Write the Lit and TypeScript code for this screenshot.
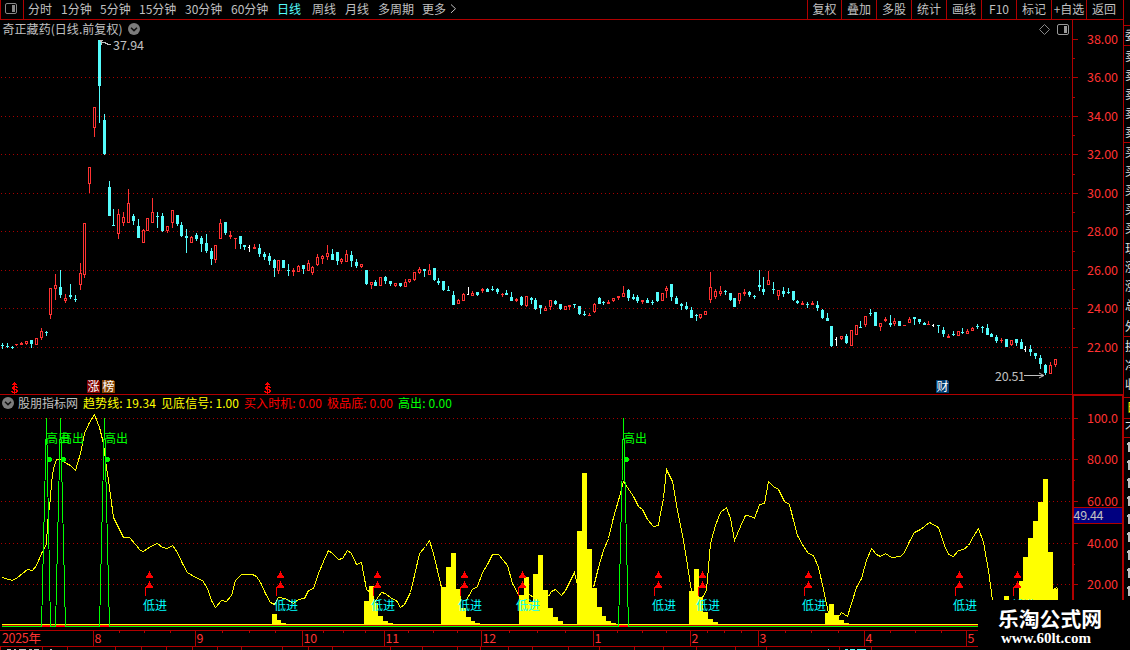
import { LitElement, html, svg, css } from "lit";
import { customElement } from "lit/decorators.js";

const RED = "#ff3232";
const FRAME = "#b00000";
const GRAY = "#c0c0c0";
const CYAN = "#54fcfc";
const YELLOW = "#ffff00";
const GREEN = "#00ff00";

// Candles: x, high, low, body top, body bottom. A leading letter gives the kind:
// r rising, c falling, w unchanged; a body of one row is drawn as a dash.
const CANDLES = `
c 2 343 349 345 346|c 7 343 348 346 347|c 12 346 349 347 348|r 16 344 346 344 345|r 21 342 345 343 345|r 26 341 345 341 344
c 31 340 348 340 344|r 36 338 345 338 345|r 41 328 340 331 338|c 46 331 336 332 333|r 50 288 319 288 315|r 55 274 300 285 289
c 60 270 298 287 295|r 65 294 303 298 301|c 70 284 299 295 297|c 75 295 302 299 300|r 80 263 290 273 285|r 84 223 278 223 275
r 89 167 193 167 184|r 94 107 137 107 128|c 99 40 123 40 86|c 104 114 155 120 154|c 109 181 216 187 216|c 113 209 226 225 226
r 118 209 239 214 234|r 123 212 226 217 223|r 128 189 223 203 223|c 133 214 225 216 221|c 138 219 238 226 238|r 143 229 243 230 243
r 147 218 231 218 231|r 152 198 223 212 223|c 157 212 228 216 217|c 162 213 232 216 231|r 167 226 233 226 231|r 172 210 228 210 223
c 177 215 226 215 224|c 181 222 237 225 236|c 186 229 253 236 238|r 191 236 243 237 243|c 196 233 241 235 239|c 201 236 252 238 244
c 206 234 253 243 251|c 211 248 265 251 259|r 215 245 263 245 260|r 220 219 239 223 239|c 225 222 235 222 233|r 230 231 239 235 237
r 235 238 249 238 239|c 240 236 249 236 244|c 244 245 250 245 247|w 249 245 252 247 248|r 254 244 249 247 249|c 259 244 257 248 254
c 264 252 260 254 257|c 269 253 265 256 261|c 274 259 277 260 268|r 278 260 274 260 271|c 283 260 268 260 268|c 288 264 276 270 271
r 293 268 276 270 272|r 298 265 272 266 272|c 303 265 274 265 269|r 308 260 271 263 271|r 312 266 275 267 273|r 317 254 266 257 265
r 322 255 264 256 259|r 327 245 260 253 257|c 332 249 260 254 260|c 337 252 265 252 261|r 341 258 264 259 262|r 346 250 262 254 262
c 351 251 267 255 261|c 356 259 268 262 266|r 361 264 268 264 267|c 366 270 285 270 284|r 371 282 289 282 285|c 375 280 286 282 286
r 380 277 286 277 286|c 385 276 284 277 281|c 390 281 286 281 284|r 395 283 287 283 286|c 400 283 287 283 286|r 405 279 287 282 287
r 409 279 283 279 282|r 414 272 281 272 280|r 419 267 274 269 273|c 424 269 277 269 271|r 429 264 275 270 275|c 434 268 281 268 280
c 438 278 285 281 283|c 443 281 291 281 290|c 448 286 291 290 291|c 453 291 305 295 305|r 458 299 304 300 304|r 463 293 301 294 301
w 468 287 295 294 295|r 472 291 296 293 296|c 477 292 296 292 295|r 482 288 293 289 291|c 487 288 292 289 292|c 492 286 291 289 290
c 497 288 294 289 292|r 502 293 297 294 295|c 506 290 295 293 295|c 511 292 301 297 301|r 516 298 302 299 301|c 521 296 306 297 305
r 526 296 307 296 306|c 531 297 304 298 300|c 535 298 310 300 309|c 540 305 314 305 308|r 545 306 311 308 311|r 550 300 310 300 307
c 555 300 305 301 304|c 560 304 310 304 309|r 565 306 310 306 310|r 569 305 310 305 307|c 574 304 308 304 305|c 579 306 315 306 314
c 584 311 316 314 315|r 589 313 316 315 316|r 594 303 313 304 312|c 599 297 304 298 304|c 603 301 305 302 303|r 608 300 304 302 304
r 613 298 302 298 301|r 618 296 300 296 298|r 623 286 297 293 297|c 628 289 301 290 298|c 633 294 300 297 299|c 637 295 303 297 301
r 642 300 304 300 302|c 647 298 303 300 303|c 652 300 305 302 303|c 657 292 302 292 301|r 662 293 301 293 301|r 666 286 298 288 291
c 671 284 301 284 297|c 676 296 304 298 304|c 681 303 310 304 306|c 686 302 310 306 309|c 691 307 318 310 318|c 696 314 321 315 316
r 700 314 319 314 318|r 705 311 315 311 315|r 710 272 303 287 300|r 715 289 299 291 297|r 720 286 296 291 294|c 725 290 295 291 292
c 730 293 301 293 300|c 734 298 307 298 307|r 739 293 304 293 301|r 744 289 296 292 294|c 749 291 297 292 295|c 754 295 299 296 297
c 759 270 291 285 287|c 763 277 295 289 292|r 768 271 285 280 285|c 773 282 294 289 290|r 778 290 300 290 296|c 783 287 297 291 294
c 788 288 294 292 293|c 793 291 301 291 300|c 797 300 304 301 303|r 802 301 305 303 305|c 807 302 308 304 305|r 812 301 305 303 305
c 817 301 311 305 308|c 822 309 319 310 318|c 827 313 321 318 321|c 831 326 347 326 346|w 836 337 346 339 340|r 841 336 340 336 339
c 846 334 344 336 343|r 851 330 346 330 346|r 856 325 335 325 335|c 860 321 328 327 328|r 865 316 327 316 325|c 870 309 316 313 314
c 875 312 326 312 326|r 880 323 331 323 327|r 885 317 322 319 321|c 890 315 327 323 325|r 894 318 326 321 324|c 899 321 326 321 326
r 904 325 326 325 326|r 909 317 323 319 323|c 914 317 325 317 319|c 919 319 324 319 322|c 924 322 325 323 325|r 928 321 325 324 325
w 933 324 327 325 326|c 938 325 333 325 326|c 943 327 337 330 334|r 948 334 338 336 338|c 953 331 336 334 335|r 958 331 336 331 336
c 962 328 334 332 333|r 967 329 334 331 334|r 972 327 331 328 331|c 977 324 329 326 327|c 982 326 333 327 328|c 987 324 335 328 335
c 991 333 337 334 337|c 996 335 343 337 341|r 1001 338 343 340 341|c 1006 339 347 339 347|r 1011 340 346 340 345|c 1016 339 346 339 343
c 1021 339 349 342 349|w 1025 346 352 349 350|c 1030 345 356 349 352|c 1035 353 359 353 356|c 1040 355 369 358 364|c 1045 364 375 365 373
r 1050 362 374 365 374|r 1055 359 367 359 365`
  .trim()
  .split(/[|\n]/)
  .map((row) => {
    const [kind, ...n] = row.split(" ");
    return { kind, n: n.map(Number) };
  });

// Volume-like histogram columns: left, right, top.
const BARS: number[][] = [
  [272, 277, 614], [277, 281, 620], [281, 286, 623],
  [364, 369, 601], [369, 374, 586], [374, 378, 603], [378, 383, 616], [383, 388, 621], [388, 393, 623],
  [441, 446, 587], [446, 451, 567], [451, 456, 553], [456, 461, 589], [461, 466, 608], [466, 471, 617], [471, 475, 621], [475, 480, 623],
  [519, 524, 595], [524, 529, 577], [529, 533, 602], [533, 538, 574], [538, 543, 555], [543, 548, 590], [548, 553, 608], [553, 558, 617], [558, 563, 621],
  [577, 582, 531], [582, 587, 473], [587, 592, 549], [592, 597, 588], [597, 602, 607], [602, 606, 616], [606, 611, 621], [611, 616, 623],
  [689, 694, 591], [694, 699, 569], [699, 703, 597], [703, 708, 612], [708, 713, 619], [713, 718, 622],
  [825, 829, 613], [829, 834, 604], [834, 839, 615], [839, 844, 620], [844, 849, 623],
  [1004, 1009, 596], [1019, 1023, 581], [1023, 1028, 557], [1028, 1033, 538], [1033, 1038, 521],
  [1038, 1043, 502], [1043, 1048, 479], [1048, 1053, 552], [1053, 1058, 589],
];

const TREND = [
  "2,577 5,578 12,580 17,577 22,573 27,569 32,570 36,565 41,553 46,544 47,523 50,497 51,482 53,468 56,459 61,459 66,463 70,465 75,470 80,453 84,433 89,422 94,414 99,427 103,443 105,460 108,480 113,517 117,525 123,537 129,537 135,544 140,550 143,551 150,546 157,543 162,547 167,548 172,545 177,552 182,563 187,572 195,577 202,580 207,588 211,600 215,607 221,600 226,601 231,595 235,580 241,574 252,574 256,576 260,582 265,593 270,602 274,604 278,597 285,598 293,603 298,599 304,598 308,590 313,588 318,573 323,561 328,550 332,553 338,559 342,558 347,550 351,553 356,564 361,562 366,589 370,592 374,602 378,596 381,592 385,593 391,598 396,600 400,607 404,604 410,592 414,575 419,553 425,546 429,540 433,553 441,587",
  "465,601 472,589 477,586 482,572 487,564 492,554 498,554 503,560 507,565 512,583 517,592 520,598",
  "529,594 533,597 536,602",
  "548,596 551,591 555,589 561,595 565,590 569,582 574,572 577,585",
  "593,587 598,567 603,550 608,538 613,517 618,500 623,481 627,487 633,496 638,506 642,509 647,519 653,526 658,525 660,513 663,498 666,469 672,481 677,510 682,535 686,558 691,591",
  "702,597 706,590 710,543 715,525 720,512 726,507 730,518 734,540 740,526 745,515 751,516 754,518 759,504 764,503 768,481 773,486 778,489 784,501 789,504 793,520 797,535 803,546 808,553 813,555 818,567 823,589 828,613",
  "837,618 841,612 847,616 851,603 856,587 861,578 866,560 871,548 876,554 880,556 885,553 891,557 900,556 904,552 909,541 914,532 920,529 929,522 938,527 944,545 948,554 953,556 958,550 963,549 968,545 973,536 978,528 983,542 988,570 992,600",
  "1053,589 1056,587 1058,590",
];

const SPIKES = [[41, 46, 50], [55, 60, 65], [99, 104, 109], [618, 623, 628]];
const HIGH_DOTS = [49, 63, 107, 626];
const HIGH_LABELS = [46, 60, 104, 623];
const LOW_MARKS = [149, 280, 377, 464, 522, 658, 702, 808, 959, 1017];
const PERIODS = ["分时", "1分钟", "5分钟", "15分钟", "30分钟", "60分钟", "日线", "周线", "月线", "多周期", "更多"];
const TOOLS = ["复权", "叠加", "多股", "统计", "画线", "F10", "标记", "+自选", "返回"];
const MONTHS: [number, string][] = [[93, "8"], [195, "9"], [302, "10"], [384, "11"], [481, "12"], [593, "1"], [690, "2"], [758, "3"], [864, "4"], [966, "5"]];
const WEEK_TICKS = [119, 144, 170, 222, 249, 275, 323, 343, 365, 408, 433, 457, 509, 537, 565, 617, 642, 666, 707, 724, 741, 785, 811, 838, 890, 915, 941];
const FOOT_TICKS = [0, 42, 67, 115, 141, 166, 192, 217, 241, 282, 308, 332, 390, 422, 457, 480, 508, 532, 568, 599, 634, 663, 696, 735, 766, 839, 871];
const PRICE_ROWS = [39, 77, 116, 154, 193, 231, 270, 308, 347];
const VALUE_ROWS: [number, string][] = [[418, "100.0"], [459, "80.00"], [501, "60.00"], [543, "40.00"], [584, "20.00"]];
const QUOTE_ROWS: [number, string][] = [
  [36, "委"], [57, "卖"], [76, "卖"], [95, "卖"], [114, "卖"], [133, "卖"], [153, "买"], [172, "买"], [191, "买"], [210, "买"], [229, "买"],
  [249, "现"], [268, "涨"], [287, "涨"], [306, "总"], [327, "外"], [347, "换"], [366, "净"], [385, "收"],
];

const label = (x: number, mid: number, text: string, fill: string, width: number, size = 12) =>
  svg`<text x=${x} y=${mid + size * 0.37} fill=${fill} font-size=${size} textLength=${width}>${text}</text>`;

const box = (x: number, y: number, w: number, h: number, fill: string) =>
  svg`<rect x=${x} y=${y} width=${w} height=${h} fill=${fill}></rect>`;

const dotted = (y: number) =>
  svg`<line x1="1" x2="1072" y1=${y + 0.5} y2=${y + 0.5} stroke="#a80000" stroke-dasharray="1 3"></line>`;

const chevron = (x: number, y: number) => svg`
  <g shape-rendering="auto">
    <circle cx=${x} cy=${y} r="6" fill="#7c7c7c"></circle>
    <path d="M${x - 3} ${y - 1.2}l3 2.8l3 -2.8" fill="none" stroke="#101010" stroke-width="1.5"></path>
  </g>`;

const candle = (kind: string, [x, high, low, top, bottom]: number[]) => {
  const color = kind === "r" ? RED : kind === "c" ? CYAN : "#ffffff";
  const height = bottom - top;
  if (kind === "w") return svg`${box(x, high, 1, low - high, color)}${box(x - 1, top, 1, 1, color)}`;
  if (kind === "r" && height > 2)
    return svg`${box(x, high, 1, low - high, color)}${box(x - 1, top, 3, height, color)}${box(x, top + 1, 1, height - 2, "#000")}`;
  return svg`${box(x, high, 1, low - high, color)}${box(x - 1, top, 3, height, color)}`;
};

const badge = (x: number, text: string, fill: string) => svg`
  <path d="M${x} 380h11l2 2v11h-13z" fill=${fill}></path>
  ${label(x + 0.5, 386.5, text, "#ffffff", 12)}`;

const dividend = (x: number) => svg`
  <path d="M${x} 382h1v1h1v1h1v1h-5v-1h1v-1h1z" fill="#ff0000"></path>
  <path d="M${x - 1} 386h4v1h1v1h-2v-1h-2v2h3v1h1v2h-1v1h-5v-1h-1v-1h2v1h3v-2h-3v-1h-1v-2h1z" fill="#ff0000"></path>
  ${box(x, 385, 1, 9, "#ff0000")}`;

@customElement("price-pane")
export class PricePane extends LitElement {
  static styles = css`
    :host { display: block; height: 375px; }
    .canvas { display: block; font-family: "Noto Sans CJK SC", sans-serif; shape-rendering: crispEdges; }
  `;
  render() {
    return html`<svg class="canvas" width="1072" height="375" viewBox="0 20 1072 375">
      ${PRICE_ROWS.slice(1).map(dotted)}
      ${label(2.5, 29.3, "奇正藏药(日线.前复权)", GRAY, 120)}
      ${chevron(134, 29)}
      ${CANDLES.map((c) => candle(c.kind, c.n))}
      <path d="M100 41.5h2M101.5 42.5h4M105 43.5h3M107 44.5h4M100 40.5h3M101.5 40v5" fill="none" stroke="#c0c0c0"></path>
      ${label(113, 45.7, "37.94", GRAY, 31, 12.5)}
      ${label(995, 376.6, "20.51", GRAY, 30, 12.5)}
      <path d="M1024 375.5h20" stroke="#c0c0c0"></path>
      <path d="M1039 373l5 2.5l-5 2.5" fill="none" stroke="#c0c0c0" shape-rendering="auto"></path>
      <path d="M1044.5 24.5l5 5l-5 5l-5 -5z" fill="none" stroke="#888" shape-rendering="auto"></path>
      <rect x="1057.5" y="24.5" width="11" height="10" rx="1.5" fill="none" stroke="#999" shape-rendering="auto"></rect>
      ${box(1064, 26, 3, 7, "#999")}
      ${dividend(14)}${dividend(267)}
      ${badge(87, "涨", "#800000")}${badge(102, "榜", "#804000")}${badge(936, "财", "#003c70")}
      ${box(0, 394, 1072, 1, FRAME)}
    </svg>`;
  }
}

@customElement("signal-pane")
export class SignalPane extends LitElement {
  static styles = css`
    :host { display: block; height: 235px; }
    .canvas { display: block; font-family: "Noto Sans CJK SC", sans-serif; shape-rendering: crispEdges; }
  `;
  render() {
    return html`<svg class="canvas" width="1072" height="235" viewBox="0 395 1072 235">
      ${VALUE_ROWS.map(([y]) => dotted(y))}
      ${chevron(8, 403)}
      ${label(18, 403.3, "股朋指标网", GRAY, 60)}
      ${label(83, 403.3, "趋势线: 19.34", YELLOW, 73)}
      ${label(161, 403.3, "见底信号: 1.00", YELLOW, 78)}
      ${label(244, 403.3, "买入时机: 0.00", "#ff0000", 78)}
      ${label(327, 403.3, "极品底: 0.00", "#ff0000", 66)}
      ${label(398, 403.3, "高出: 0.00", GREEN, 54)}
      ${TREND.map((points) => svg`<polyline points=${points} transform="translate(0.5 0.5)" fill="none" stroke=${YELLOW}></polyline>`)}
      ${BARS.map(([a, b, top]) => box(a, top, b - a, 624 - top, YELLOW))}
      ${box(2, 624, 1070, 1, YELLOW)}${box(2, 625, 1070, 1, "#c00000")}${box(2, 626, 1070, 1, GREEN)}
      ${SPIKES.map(([a, m, b]) => svg`
        ${box(a + 1, 625, b - a - 1, 2, "#ff0000")}
        <path d="M${a + 0.5} 627L${m + 0.5} 418L${b + 0.5} 627" fill="none" stroke=${GREEN} stroke-linejoin="bevel"></path>`)}
      ${HIGH_DOTS.map((x) => svg`<circle cx=${x + 0.5} cy="459.5" r="2.5" fill=${GREEN}></circle>`)}
      ${HIGH_LABELS.map((x) => label(x, 438.6, "高出", GREEN, 24))}
      ${LOW_MARKS.map((x) => svg`
        <path d="M${x} 571h1v2h1v2h1v1h1v2h-7v-2h1v-1h1v-2h1zM${x} 581h1v2h1v2h1v1h1v2h-7v-2h1v-1h1v-2h1z" fill="#ff0000"></path>
        ${box(x - 4, 587, 1, 9, "#ff0000")}${box(x - 3, 587, 2, 1, "#ff0000")}
        ${label(x - 6, 605.6, "低进", "#00ffff", 24)}`)}
    </svg>`;
  }
}

@customElement("time-axis")
export class TimeAxis extends LitElement {
  static styles = css`
    :host { display: block; height: 20px; }
    .canvas { display: block; font-family: "Noto Sans CJK SC", sans-serif; shape-rendering: crispEdges; }
  `;
  render() {
    return html`<svg class="canvas" width="1072" height="20" viewBox="0 630 1072 20">
      ${box(0, 630, 1072, 1, FRAME)}${box(0, 646, 1072, 1, FRAME)}
      ${WEEK_TICKS.map((x) => box(x, 631, 1, 2, FRAME))}
      ${FOOT_TICKS.map((x) => box(x, 647, 1, 3, FRAME))}
      ${label(2, 638.6, "2025年", RED, 39, 12.5)}
      ${MONTHS.map(([x, m]) => svg`${box(x, 631, 1, 15, FRAME)}${label(x + 1.5, 638.6, m, RED, m.length * 6.8, 12.5)}`)}
      <path d="M7 649.5h4M14 649.5h2M19 649.5h7M29 649.5h3M34 649.5h5M50 649.5h2" stroke="#c0c0c0"></path>
      <path d="M828 649.5h1M845 649.5h3M850 649.5h5M857 649.5h9" stroke="#54fcfc"></path>
    </svg>`;
  }
}

@customElement("value-scale")
export class ValueScale extends LitElement {
  static styles = css`
    :host { display: block; height: 630px; }
    .canvas { display: block; font-family: "Noto Sans CJK SC", sans-serif; shape-rendering: crispEdges; }
  `;
  render() {
    const minor = [58, 97, 135, 174, 212, 251, 289, 328];
    return html`<svg class="canvas" width="58" height="630" viewBox="1072 20 58 630">
      ${box(1072, 20, 1, 374, FRAME)}${box(1123, 20, 1, 374, FRAME)}
      ${PRICE_ROWS.map((y, i) => svg`${box(1073, y, 5, 1, FRAME)}${label(1087, y + 0.6, `${38 - i * 2}.00`, RED, 31, 12.5)}`)}
      ${minor.map((y) => box(1073, y, 2, 1, FRAME))}
      ${box(1072, 394, 52, 2, FRAME)}${box(1072, 394, 2, 240, FRAME)}${box(1122, 394, 2, 240, FRAME)}
      ${VALUE_ROWS.map(([y, text]) => svg`${box(1074, y, 4, 1, FRAME)}${label(1087, y + 0.6, text, RED, 31, 12.5)}`)}
      ${[439, 480, 564].map((y) => box(1074, y, 1, 1, FRAME))}
      ${box(1074, 507, 48, 17, FRAME)}${box(1074, 508, 48, 15, "#000080")}
      ${label(1073.5, 515, "49.44", GRAY, 30, 12.5)}
      ${[25, 45, 142, 336, 397, 418, 437].map((y) => box(1124, y, 6, 1, FRAME))}
      ${QUOTE_ROWS.map(([y, text]) => label(1125, y, text, "#e0e0e0", 12))}
      ${label(1126.5, 408, "日", YELLOW, 12)}${label(1125, 428, "不", "#e0e0e0", 12)}
      ${Array.from({ length: 9 }, (_, i) => svg`${box(1128, 442 + i * 18, 2, 10, GRAY)}${box(1127, 443 + i * 18, 1, 2, GRAY)}`)}
    </svg>`;
  }
}

@customElement("app-root")
export class AppRoot extends LitElement {
  static styles = css`
    :host {
      display: block;
      position: relative;
      width: 1130px;
      height: 650px;
      overflow: hidden;
      background: #000;
      color: #c0c0c0;
      font: 12px/18px "Noto Sans CJK SC", sans-serif;
    }
    .top { display: flex; height: 20px; width: 1124px; box-sizing: border-box; border-bottom: 1px solid #b00000; border-right: 1px solid #b00000; }
    .toggle { display: flex; width: 24px; box-sizing: border-box; border: solid #b00000; border-width: 0 1px; padding: 3px 0 0 4px; }
    .periods { display: grid; grid-template-columns: 33px 39px 39px 46px 46px 46px 35px 33px 33px 44px 28px 10px; padding-left: 4px; white-space: nowrap; }
    .active { color: #54fcfc; }
    .more { display: block; padding-top: 4px; }
    .tools { display: grid; grid-template-columns: 34px repeat(8, 35px); margin-left: auto; width: 316px; text-align: center; white-space: nowrap; }
    .tool { border-left: 1px solid #b00000; }
    .body { display: grid; grid-template-columns: 1072px 58px; }
    .brand { position: absolute; right: 0; bottom: 0; width: 152px; height: 50px; box-sizing: border-box; padding: 7px 0 0 20px; background: #000; color: #fff; }
    .name { font-size: 20.8px; font-weight: 700; line-height: 22px; white-space: nowrap; }
    .site { padding: 1px 0 0 3px; font: bold 15px/17px "Liberation Serif", serif; }
  `;
  render() {
    return html`
      <header class="top">
        <div class="toggle">
          <svg width="14" height="12">
            <rect x="0.5" y="0.5" width="11" height="10" rx="1.5" fill="none" stroke="#888"></rect>
            <rect x="7" y="2" width="3" height="7" fill="#888"></rect>
          </svg>
        </div>
        <nav class="periods">
          ${PERIODS.map((p) => html`<span class=${p === "日线" ? "active" : "period"}>${p}</span>`)}
          <svg class="more" width="8" height="10"><path d="M1 0.5l4.5 4.2l-4.5 4.2" fill="none" stroke="#c0c0c0"></path></svg>
        </nav>
        <div class="tools">${TOOLS.map((t) => html`<span class="tool">${t}</span>`)}</div>
      </header>
      <main class="body">
        <section>
          <price-pane></price-pane>
          <signal-pane></signal-pane>
          <time-axis></time-axis>
        </section>
        <value-scale></value-scale>
      </main>
      <aside class="brand">
        <div class="name">乐淘公式网</div>
        <div class="site">www.60lt.com</div>
      </aside>
    `;
  }
}
